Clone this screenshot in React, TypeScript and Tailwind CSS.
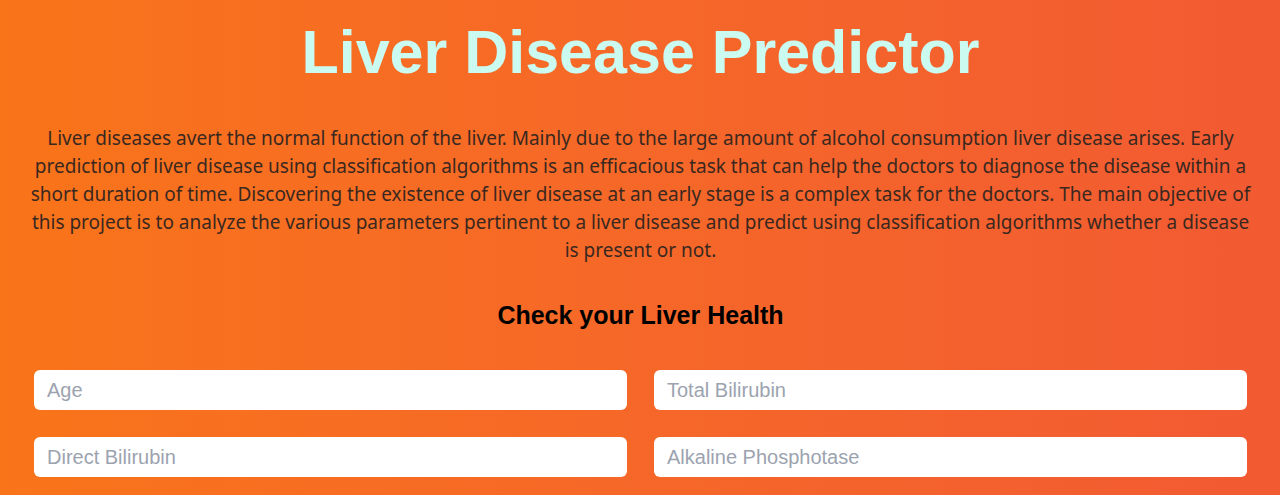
import React from "react";

export default function App() {
  const fields = ["Age", "Total Bilirubin", "Direct Bilirubin", "Alkaline Phosphotase"];
  const lines = [
    "Liver diseases avert the normal function of the liver. Mainly due to the large amount of alcohol consumption liver disease arises. Early",
    "prediction of liver disease using classification algorithms is an efficacious task that can help the doctors to diagnose the disease within a",
    "short duration of time. Discovering the existence of liver disease at an early stage is a complex task for the doctors. The main objective of",
    "this project is to analyze the various parameters pertinent to a liver disease and predict using classification algorithms whether a disease",
    "is present or not.",
  ];
  return (
    <div className="min-h-[495px] w-full bg-gradient-to-r from-[#f97419] to-[#f25a32]">
      <div className="pl-[34px] pr-[33px] pt-[18px]">
        <h1 className="text-center text-[61px] font-bold leading-[68px] text-[#cbfbf0] [font-family:'Liberation_Sans',Arial,sans-serif]">
          Liver Disease Predictor
        </h1>
        <p className="-mx-[30px] mt-[38px] flex flex-col items-center text-center text-[19px] leading-[28px] text-[#3a2820] [font-family:'Noto_Sans',sans-serif]">
          {lines.map((l, i) => (
            <span key={i} className="block whitespace-nowrap">
              {l}
            </span>
          ))}
        </p>
        <h2 className="mt-[36px] text-center text-[25px] font-bold leading-[30px] text-black [font-family:'Liberation_Sans',Arial,sans-serif]">
          Check your Liver Health
        </h2>
        <div className="mt-[40px] grid grid-cols-2 gap-x-[27px] gap-y-[27px]">
          {fields.map((f) => (
            <input
              key={f}
              placeholder={f}
              className="h-[40px] w-full rounded-md bg-white px-[13px] text-[20px] text-gray-700 outline-none placeholder:text-[#9ca3af] [font-family:'Liberation_Sans',Arial,sans-serif]"
            />
          ))}
        </div>
      </div>
    </div>
  );
}
